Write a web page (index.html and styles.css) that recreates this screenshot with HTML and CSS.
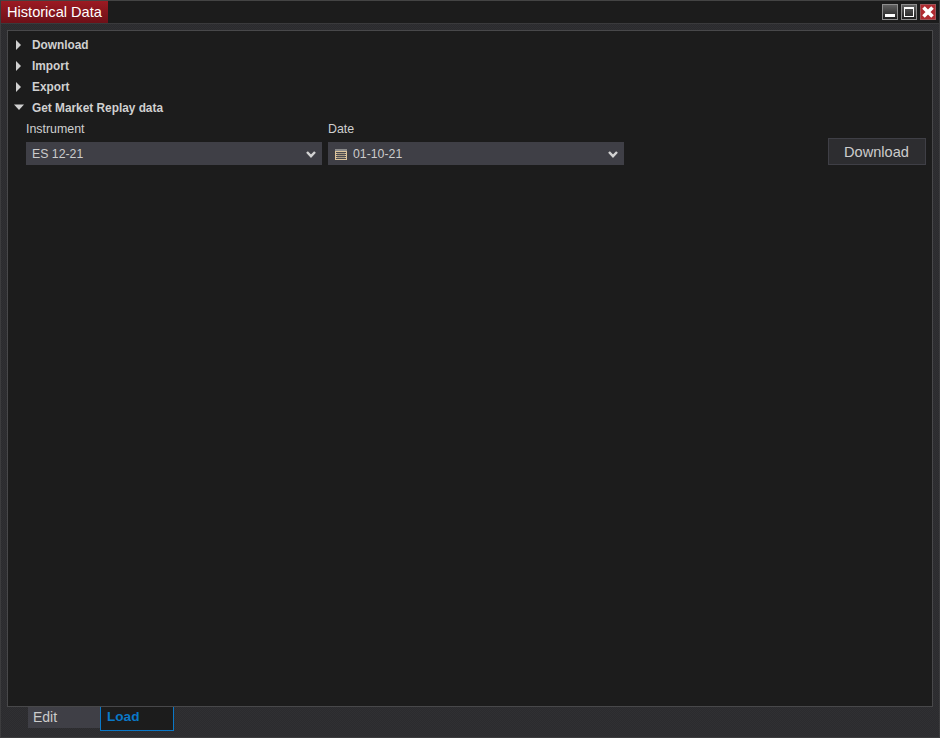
FILE: index.html
```html
<!DOCTYPE html>
<html lang="en">
<head>
<meta charset="utf-8">
<title>Historical Data</title>
<link rel="stylesheet" href="styles.css">
</head>
<body>
<div class="window">
  <header class="titlebar">
    <div class="title">Historical Data</div>
    <div class="controls">
      <button class="ctl" aria-label="Minimize"><svg width="16" height="16" viewBox="0 0 16 16"><rect x="3" y="10" width="10" height="3" fill="#fff"/></svg></button>
      <button class="ctl" aria-label="Maximize"><svg width="16" height="16" viewBox="0 0 16 16"><rect x="3.5" y="3.5" width="9" height="9" fill="none" stroke="#fff"/><rect x="3" y="3" width="10" height="2" fill="#fff"/></svg></button>
      <button class="ctl close" aria-label="Close"><svg width="16" height="16" viewBox="0 0 16 16"><path d="M3.5 3.5 12.5 12.5M12.5 3.5 3.5 12.5" stroke="#fff" stroke-width="3.6"/></svg></button>
    </div>
  </header>
  <main class="panel">
    <div class="row"><svg class="arrow" width="12" height="12" viewBox="0 0 12 12"><path d="M3 1 8 6 3 11Z"/></svg><span>Download</span></div>
    <div class="row"><svg class="arrow" width="12" height="12" viewBox="0 0 12 12"><path d="M3 1 8 6 3 11Z"/></svg><span>Import</span></div>
    <div class="row"><svg class="arrow" width="12" height="12" viewBox="0 0 12 12"><path d="M3 1 8 6 3 11Z"/></svg><span>Export</span></div>
    <div class="row"><svg class="arrow" width="12" height="12" viewBox="0 0 12 12"><path d="M1 2.5H11L6 8Z"/></svg><span>Get Market Replay data</span></div>
    <div class="form">
      <div class="field">
        <label>Instrument</label>
        <div class="select"><span class="value">ES 12-21</span><svg class="chev" width="10" height="7" viewBox="0 0 10 7"><path d="M1 1 5 5.2 9 1" fill="none" stroke="#d2d2d2" stroke-width="2.4"/></svg></div>
      </div>
      <div class="field">
        <label>Date</label>
        <div class="select"><svg class="cal" width="12" height="11" viewBox="0 0 12 11"><rect width="12" height="11" fill="#dcc49c"/><rect width="12" height="2" fill="#8a8a8a"/><path d="M1 3.5H11M1 5.5H11M1 7.5H11M1 9.5H11" stroke="#4a4a50"/><path d="M3 3V10M5 3V10M7 3V10M9 3V10" stroke="#4a4a50" stroke-opacity=".7"/></svg><span class="value">01-10-21</span><svg class="chev" width="10" height="7" viewBox="0 0 10 7"><path d="M1 1 5 5.2 9 1" fill="none" stroke="#d2d2d2" stroke-width="2.4"/></svg></div>
      </div>
      <button class="download">Download</button>
    </div>
  </main>
  <nav class="tabs">
    <div class="tab">Edit</div>
    <div class="tab active">Load</div>
  </nav>
</div>
</body>
</html>
```
FILE: styles.css
```css
* { box-sizing: border-box; }
html, body { margin: 0; height: 100%; background: #2d2d30; }
body { font-family: "Liberation Sans", Arial, sans-serif; color: #d2d2d2; overflow: hidden; }
.window { width: 940px; height: 738px; display: flex; flex-direction: column; border: 1px solid #3c3c3e; border-top-color: #444; background: repeating-conic-gradient(#2b2b2e 0 25%, #303033 0 50%) 0 0 / 2px 2px; }
.titlebar { height: 23px; flex: none; display: flex; justify-content: space-between; background: #1c1c1c; border-bottom: 1px solid #3a3a3c; }
.title { width: 107px; height: 22px; padding-left: 6px; font-size: 14.6px; line-height: 22px; color: #fff; background: linear-gradient(#9c1a22, #6e1018); white-space: nowrap; }
.controls { display: flex; gap: 3px; padding: 3px 3px 0 0; }
.ctl { width: 16px; height: 16px; padding: 0; border: 1px solid #8e8e8e; background: linear-gradient(#606060, #1e1e1e); display: block; }
.ctl svg { display: block; margin: -1px; }
.ctl.close { background: #b02a30; border-color: #a05458; }
.panel { flex: none; height: 677px; margin: 6px 6px 0; background: #1c1c1c; border: 1px solid #48484a; padding-top: 3px; }
.row { height: 21px; display: flex; align-items: center; font-size: 11.85px; font-weight: bold; color: #d0d0d0; padding-left: 5px; gap: 7px; }
.arrow { fill: #d0d0d0; flex: none; }
.form { display: flex; padding: 4px 6px 0 18px; gap: 6px; align-items: flex-end; }
.field { width: 296px; display: flex; flex-direction: column; }
.field label { font-size: 12.4px; line-height: 14px; height: 20px; color: #cfcfcf; }
.select { height: 23px; background: #3f3f46; display: flex; align-items: center; font-size: 12.3px; padding: 0 6px; color: #cccccc; }
.value { flex: 1; }
.cal { margin: 1px 6px 0 1px; flex: none; }
.chev { flex: none; margin-top: 1px; }
.download { margin-left: auto; width: 98px; height: 27px; font: 14.6px "Liberation Sans", Arial, sans-serif; color: #cccccc; background: #2d2d30; border: 1px solid #3f3f46; padding: 0 1px 0 0; }
.tabs { display: flex; padding-left: 27px; height: 24px; align-items: flex-start; }
.tab { width: 72px; height: 21px; background: #3f3f46; font-size: 14px; line-height: 20px; padding-left: 5px; color: #cccccc; }
.tab.active { width: 74px; height: 24px; padding-left: 6px; font-size: 13.6px; background: #1c1c1c; color: #0a78c8; font-weight: bold; border: 1px solid #0a78c8; border-top: 0; }
```
